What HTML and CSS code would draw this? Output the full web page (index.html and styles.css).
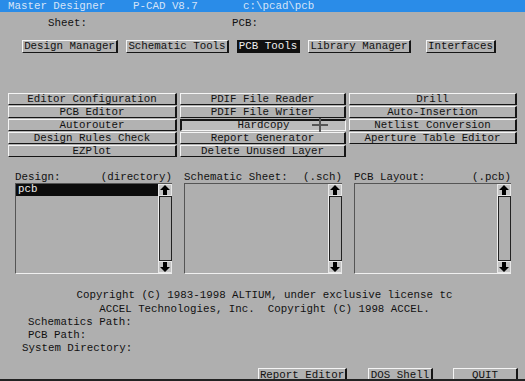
FILE: index.html
```html
<!DOCTYPE html>
<html>
  <head>
    <meta charset="UTF-8">
    <title>Master Designer</title>
    <link rel="stylesheet" href="styles.css">
  </head>
  <body>
    <div class="screen">
      <div class="titlebar">
        <span class="t-app">Master Designer</span>
        <span class="t-ver">P-CAD V8.7</span>
        <span>c:\pcad\pcb</span>
      </div>

      <div class="info">
        <span class="info-sheet">Sheet:</span>
        <span>PCB:</span>
      </div>

      <div class="tabs">
        <div class="btn tab tab-dm">Design Manager</div>
        <div class="btn tab tab-st">Schematic Tools</div>
        <div class="btn tab tab-pcb active">PCB Tools</div>
        <div class="btn tab tab-lm">Library Manager</div>
        <div class="btn tab tab-if">Interfaces</div>
      </div>

      <div class="tools">
        <div class="btn">Editor Configuration</div>
        <div class="btn">PCB Editor</div>
        <div class="btn">Autorouter</div>
        <div class="btn">Design Rules Check</div>
        <div class="btn">EZPlot</div>
        <div class="btn">PDIF File Reader</div>
        <div class="btn">PDIF File Writer</div>
        <div class="btn pressed">Hardcopy</div>
        <div class="btn">Report Generator</div>
        <div class="btn">Delete Unused Layer</div>
        <div class="btn">Drill</div>
        <div class="btn">Auto-Insertion</div>
        <div class="btn">Netlist Conversion</div>
        <div class="btn">Aperture Table Editor</div>
      </div>

      <div class="lists">
        <div class="panel">
          <div class="panel-label"><span>Design:</span><span>(directory)</span></div>
          <div class="listbox">
            <div class="items">
              <div class="item selected">pcb</div>
            </div>
            <div class="scrollbar">
              <div class="sb-btn"><svg width="10" height="10" viewBox="0 0 10 10"><polygon points="5,0 10,5 7,5 7,10 3,10 3,5 0,5" fill="#000"/></svg></div>
              <div class="sb-track"></div>
              <div class="sb-btn"><svg width="10" height="10" viewBox="0 0 10 10"><polygon points="5,10 10,5 7,5 7,0 3,0 3,5 0,5" fill="#000"/></svg></div>
            </div>
          </div>
        </div>
        <div class="panel">
          <div class="panel-label"><span>Schematic Sheet:</span><span>(.sch)</span></div>
          <div class="listbox">
            <div class="items"></div>
            <div class="scrollbar">
              <div class="sb-btn"><svg width="10" height="10" viewBox="0 0 10 10"><polygon points="5,0 10,5 7,5 7,10 3,10 3,5 0,5" fill="#000"/></svg></div>
              <div class="sb-track"></div>
              <div class="sb-btn"><svg width="10" height="10" viewBox="0 0 10 10"><polygon points="5,10 10,5 7,5 7,0 3,0 3,5 0,5" fill="#000"/></svg></div>
            </div>
          </div>
        </div>
        <div class="panel">
          <div class="panel-label"><span>PCB Layout:</span><span>(.pcb)</span></div>
          <div class="listbox">
            <div class="items"></div>
            <div class="scrollbar">
              <div class="sb-btn"><svg width="10" height="10" viewBox="0 0 10 10"><polygon points="5,0 10,5 7,5 7,10 3,10 3,5 0,5" fill="#000"/></svg></div>
              <div class="sb-track"></div>
              <div class="sb-btn"><svg width="10" height="10" viewBox="0 0 10 10"><polygon points="5,10 10,5 7,5 7,0 3,0 3,5 0,5" fill="#000"/></svg></div>
            </div>
          </div>
        </div>
      </div>

      <div class="copyright">
        <div class="line">Copyright (C) 1983-1998 ALTIUM, under exclusive license tc</div>
        <div class="line">ACCEL Technologies, Inc.  Copyright (C) 1998 ACCEL.</div>
      </div>

      <div class="paths">
        <div>Schematics Path:</div>
        <div>PCB Path:</div>
        <div class="sysdir">System Directory:</div>
      </div>

      <div class="footer">
        <div class="btn foot-report">Report Editor</div>
        <div class="btn foot-dos">DOS Shell</div>
        <div class="btn foot-quit">QUIT</div>
      </div>

      <!-- mouse cursor -->
      <svg class="cursor" width="16" height="14" viewBox="0 0 16 14">
        <rect x="7" y="0" width="2" height="14" fill="#555"/>
        <rect x="0" y="6" width="16" height="2" fill="#555"/>
      </svg>
    </div>
  </body>
</html>
```
FILE: styles.css
```css
/* whole DOS screen */
body {
  margin: 0;
  background: #afafaf;
  font-family: "Liberation Mono", "DejaVu Sans Mono", monospace;
  font-size: 10.8px;
  color: #111;
}

.screen {
  position: relative;
  width: 525px;
  height: 381px;
  overflow: hidden;
  background: #afafaf;
  border-bottom: 2px solid #222;
  box-sizing: border-box;
}

/* title bar */
.titlebar {
  display: flex;
  height: 12px;
  line-height: 12px;
  padding-left: 8px;
  background: #2a8ce8;
  color: #d6e4f8;
  white-space: pre;
}

.t-app {
  width: 125px;
}

.t-ver {
  width: 110px;
}

.info {
  display: flex;
  margin-top: 5px;
  height: 12px;
  line-height: 12px;
  padding-left: 48px;
}

.info-sheet {
  width: 184px;
}

/* buttons */
.btn {
  box-sizing: border-box;
  height: 12px;
  line-height: 10px;
  text-align: center;
  white-space: pre;
  background: #b2b2b2;
  border-top: 1px solid #f4f4f4;
  border-left: 1px solid #f4f4f4;
  border-right: 2px solid #151515;
  border-bottom: 1px solid #151515;
}

.btn.pressed {
  background: #bcbcbc;
  border-top: 2px solid #151515;
  border-left: 2px solid #151515;
  border-right: 1px solid #f4f4f4;
  border-bottom: 1px solid #f4f4f4;
  line-height: 9px;
}

.tabs {
  display: flex;
  margin-top: 11px;
  padding-left: 22px;
}

.tab {
  height: 13px;
  line-height: 11px;
  margin-right: 8px;
}

.tab-dm { width: 96px; }
.tab-st { width: 103px; }
.tab-pcb { width: 63px; }
.tab-lm { width: 103px; margin-right: 15px; }
.tab-if { width: 70px; }

.tab.active {
  background: #111;
  color: #eee;
  border-color: #111;
}

.tools {
  display: grid;
  grid-template-columns: 169px 166px 168px;
  grid-template-rows: repeat(5, 12px);
  grid-auto-flow: column;
  column-gap: 3px;
  row-gap: 1px;
  margin-top: 40px;
  padding-left: 8px;
}

/* file lists */
.lists {
  display: grid;
  grid-template-columns: 157px 158px 157px;
  column-gap: 12px;
  margin-top: 14px;
  padding-left: 15px;
}

.panel-label {
  display: flex;
  justify-content: space-between;
  height: 12px;
  line-height: 12px;
}

.listbox {
  display: flex;
  box-sizing: border-box;
  height: 91px;
  border-top: 1px solid #555;
  border-left: 1px solid #555;
  border-bottom: 1px solid #f0f0f0;
}

.items {
  flex: 1;
}

.item {
  height: 12px;
  line-height: 11px;
  padding-left: 2px;
}

.item.selected {
  background: #0c0c0c;
  color: #eee;
}

.scrollbar {
  display: flex;
  flex-direction: column;
  width: 14px;
}

.sb-btn {
  display: flex;
  justify-content: center;
  align-items: center;
  box-sizing: border-box;
  height: 12px;
  background: #c4c4c4;
  border: 1px solid #e8e8e8;
}

.sb-track {
  flex: 1;
  box-sizing: border-box;
  border-left: 1px solid #f0f0f0;
  border-right: 1px solid #222;
  box-shadow: inset 1px 0 0 #222, inset 0 1px 0 #222, inset 0 -1px 0 #222;
}

/* bottom texts */
.copyright {
  margin-top: 14px;
  line-height: 14px;
  text-align: center;
  padding-left: 4px;
}

.copyright .line {
  white-space: pre;
}

.paths {
  line-height: 13px;
  padding-left: 28px;
}

.sysdir {
  margin-left: -6px;
}

.footer {
  display: flex;
  margin-top: 13px;
  padding-left: 258px;
}

.footer .btn {
  height: 13px;
  line-height: 12px;
  border-bottom: none;
}

.foot-report { width: 89px; margin-right: 21px; }
.foot-dos { width: 65px; margin-right: 20px; }
.foot-quit { width: 65px; }

.cursor {
  position: absolute;
  left: 312px;
  top: 118px;
}
```
